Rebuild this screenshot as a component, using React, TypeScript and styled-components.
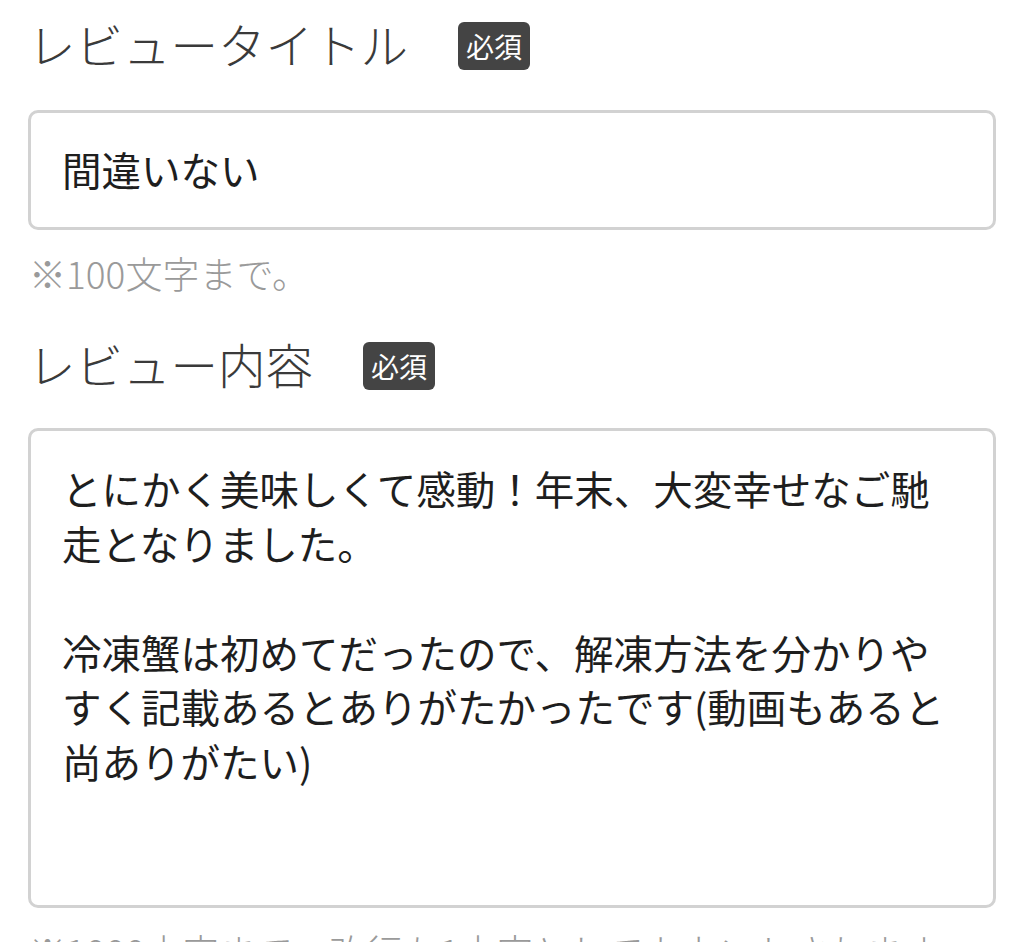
import React from "react";
import styled, { createGlobalStyle } from "styled-components";

const GlobalStyle = createGlobalStyle`
  * {
    box-sizing: border-box;
  }
  html, body {
    margin: 0;
    padding: 0;
    background: #ffffff;
    overflow: hidden;
  }
  body {
    font-family: "Noto Sans CJK JP", "Noto Sans", sans-serif;
  }
`;

const Page = styled.div`
  width: 1024px;
  height: 942px;
  padding: 0 28px;
  display: flex;
  flex-direction: column;
`;

const Field = styled.section<{ $first?: boolean }>`
  display: flex;
  flex-direction: column;
  margin-top: ${(p) => (p.$first ? "19px" : "44px")};
`;

const LabelRow = styled.div`
  display: flex;
  align-items: center;
  height: 50px;
`;

const Label = styled.h2`
  margin: 0;
  font-size: 47.5px;
  font-weight: 300;
  line-height: 50px;
  color: #3a3a3a;
`;

const Badge = styled.span`
  margin-left: 50px;
  margin-top: 4px;
  width: 72px;
  height: 48px;
  border-radius: 6px;
  background: #444444;
  color: #ffffff;
  font-size: 28px;
  font-weight: 400;
  line-height: 48px;
  text-align: center;
`;

const Box = styled.div<{ $height: number; $top: number }>`
  margin-top: ${(p) => p.$top}px;
  height: ${(p) => p.$height}px;
  border: 3px solid #d2d2d2;
  border-radius: 10px;
  padding: 0 31px;
  color: #1e1e1e;
  font-size: 39.5px;
  font-weight: 400;
`;

const SingleLine = styled.div`
  height: 100%;
  display: flex;
  align-items: center;
  padding-bottom: 4px;
`;

const MultiLine = styled.div`
  padding-top: 30px;
  line-height: 54.5px;
  white-space: pre;
`;

const Note = styled.p`
  margin: 21px 0 0 1px;
  font-size: 37px;
  font-weight: 300;
  line-height: 44px;
  color: #9a9a9a;
`;

const body =
  "とにかく美味しくて感動！年末、大変幸せなご馳\n走となりました。\n\n冷凍蟹は初めてだったので、解凍方法を分かりや\nすく記載あるとありがたかったです(動画もあると\n尚ありがたい)";

export default function App() {
  return (
    <>
      <GlobalStyle />
      <Page>
        <Field $first>
          <LabelRow>
            <Label>レビュータイトル</Label>
            <Badge>必須</Badge>
          </LabelRow>
          <Box $top={41} $height={120}>
            <SingleLine>間違いない</SingleLine>
          </Box>
          <Note>※100文字まで。</Note>
        </Field>

        <Field>
          <LabelRow>
            <Label>レビュー内容</Label>
            <Badge>必須</Badge>
          </LabelRow>
          <Box $top={39} $height={480}>
            <MultiLine>{body}</MultiLine>
          </Box>
          <Note>※1000文字まで。改行も1文字としてカウントされます。</Note>
        </Field>
      </Page>
    </>
  );
}
